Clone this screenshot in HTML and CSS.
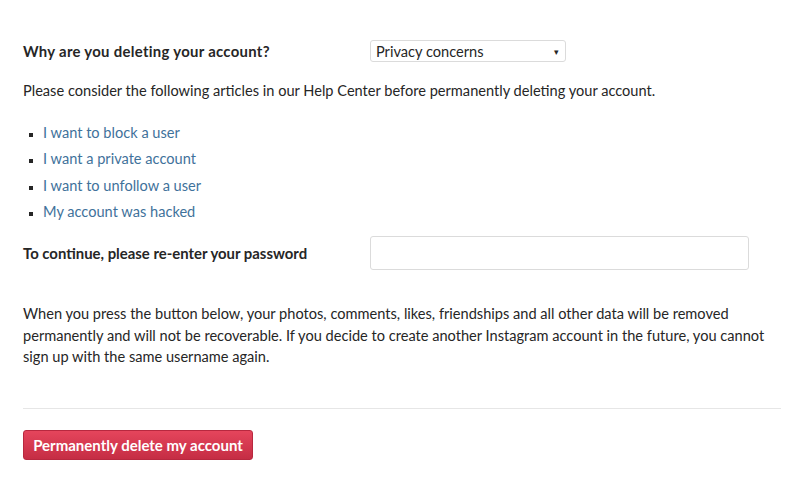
FILE: index.html
```html
<!DOCTYPE html>
<html>
<head>
<meta charset="utf-8">
<link rel="stylesheet" href="styles.css">
</head>
<body>
<div class="page">
  <div class="row reason">
    <label class="label">Why are you deleting your account?</label>
    <div class="select"><span>Privacy concerns</span><span class="caret">▾</span></div>
  </div>
  <p class="intro">Please consider the following articles in our Help Center before permanently deleting your account.</p>
  <ul class="links">
    <li><a href="#">I want to block a user</a></li>
    <li><a href="#">I want a private account</a></li>
    <li><a href="#">I want to unfollow a user</a></li>
    <li><a href="#">My account was hacked</a></li>
  </ul>
  <div class="row pass">
    <label class="label">To continue, please re-enter your password</label>
    <input class="input" type="password">
  </div>
  <p class="warning">When you press the button below, your photos, comments, likes, friendships and all other data will be removed permanently and will not be recoverable. If you decide to create another Instagram account in the future, you cannot sign up with the same username again.</p>
  <hr class="rule">
  <button class="delete">Permanently delete my account</button>
</div>
</body>
</html>
```
FILE: styles.css
```css
html, body {
  margin: 0;
  padding: 0;
  background: #fff;
}
body {
  font-family: Lato, "Open Sans", sans-serif;
  font-size: 14.6px;
  color: #262626;
}
.page {
  padding: 40px 19px 0 23px;
}
.row {
  display: grid;
  grid-template-columns: 347px auto;
  align-items: center;
}
.label {
  font-weight: 700;
  font-size: 14.9px;
}
.reason .label {
  letter-spacing: 0.3px;
}
.select {
  width: 196px;
  height: 22px;
  box-sizing: border-box;
  border: 1px solid #dbdbdb;
  border-radius: 3px;
  display: flex;
  align-items: center;
  justify-content: space-between;
  padding: 0 6px 0 5px;
  font-size: 14.6px;
}
.caret {
  font-size: 9px;
}
.intro {
  margin: 19px 0 0;
  line-height: 20px;
}
.links {
  margin: 19px 0 0;
  padding: 0 0 0 20px;
  list-style: square;
}
.links li {
  line-height: 26.3px;
}
.links li::marker {
  font-size: 11px;
}
.links a {
  color: #3f729b;
  text-decoration: none;
}
.pass {
  margin-top: 11px;
}
.input {
  width: 379px;
  height: 34px;
  box-sizing: border-box;
  border: 1px solid #dbdbdb;
  border-radius: 3px;
  margin: 0;
  background: #fff;
}
.warning {
  margin: 33px 0 0;
  line-height: 21.5px;
}
.rule {
  margin: 40px 0 0;
  border: 0;
  border-top: 1px solid #e6e6e6;
  height: 0;
}
.delete {
  margin-top: 21px;
  width: 230px;
  height: 30px;
  border: 1px solid #b8283f;
  border-radius: 3px;
  background: linear-gradient(#e5455c, #c52d44);
  color: #fff;
  font-family: Lato, "Open Sans", sans-serif;
  font-weight: 700;
  font-size: 15px;
  padding: 0;
}
```
